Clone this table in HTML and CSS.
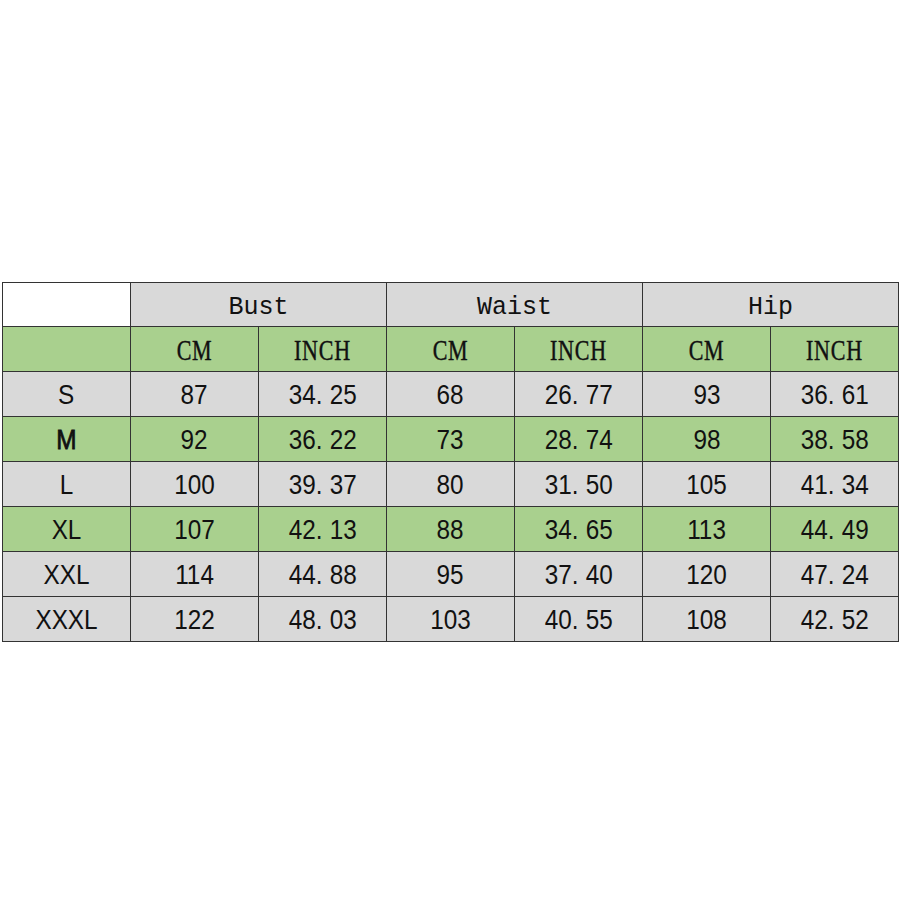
FILE: index.html
```html
<!DOCTYPE html>
<html>
<head>
<meta charset="utf-8">
<link rel="stylesheet" href="styles.css">
</head>
<body>
<div class="page">
<table class="size-table">
  <colgroup>
    <col class="c"><col class="c"><col class="c"><col class="c"><col class="c"><col class="c"><col class="c">
  </colgroup>
  <tr class="r-head">
    <td class="blank"></td>
    <td colspan="2" class="grp">Bust</td>
    <td colspan="2" class="grp">Waist</td>
    <td colspan="2" class="grp">Hip</td>
  </tr>
  <tr class="r-unit green">
    <td></td>
    <td><span class="u">CM</span></td><td><span class="u">INCH</span></td>
    <td><span class="u">CM</span></td><td><span class="u">INCH</span></td>
    <td><span class="u">CM</span></td><td><span class="u">INCH</span></td>
  </tr>
  <tr class="gray">
    <td><span class="n">S</span></td>
    <td><span class="n">87</span></td><td><span class="n">34<span class="d">.</span>25</span></td>
    <td><span class="n">68</span></td><td><span class="n">26<span class="d">.</span>77</span></td>
    <td><span class="n">93</span></td><td><span class="n">36<span class="d">.</span>61</span></td>
  </tr>
  <tr class="green">
    <td><span class="n m">M</span></td>
    <td><span class="n">92</span></td><td><span class="n">36<span class="d">.</span>22</span></td>
    <td><span class="n">73</span></td><td><span class="n">28<span class="d">.</span>74</span></td>
    <td><span class="n">98</span></td><td><span class="n">38<span class="d">.</span>58</span></td>
  </tr>
  <tr class="gray">
    <td><span class="n">L</span></td>
    <td><span class="n">100</span></td><td><span class="n">39<span class="d">.</span>37</span></td>
    <td><span class="n">80</span></td><td><span class="n">31<span class="d">.</span>50</span></td>
    <td><span class="n">105</span></td><td><span class="n">41<span class="d">.</span>34</span></td>
  </tr>
  <tr class="green">
    <td><span class="n">XL</span></td>
    <td><span class="n">107</span></td><td><span class="n">42<span class="d">.</span>13</span></td>
    <td><span class="n">88</span></td><td><span class="n">34<span class="d">.</span>65</span></td>
    <td><span class="n">113</span></td><td><span class="n">44<span class="d">.</span>49</span></td>
  </tr>
  <tr class="gray">
    <td><span class="n">XXL</span></td>
    <td><span class="n">114</span></td><td><span class="n">44<span class="d">.</span>88</span></td>
    <td><span class="n">95</span></td><td><span class="n">37<span class="d">.</span>40</span></td>
    <td><span class="n">120</span></td><td><span class="n">47<span class="d">.</span>24</span></td>
  </tr>
  <tr class="gray">
    <td><span class="n">XXXL</span></td>
    <td><span class="n">122</span></td><td><span class="n">48<span class="d">.</span>03</span></td>
    <td><span class="n">103</span></td><td><span class="n">40<span class="d">.</span>55</span></td>
    <td><span class="n">108</span></td><td><span class="n">42<span class="d">.</span>52</span></td>
  </tr>
</table>
</div>
</body>
</html>
```
FILE: styles.css
```css
html, body {
  margin: 0;
  padding: 0;
  background: #ffffff;
}
.page {
  padding: 282px 0 0 2px;
}
.size-table {
  border-collapse: collapse;
  table-layout: fixed;
  width: 897px;
  font-family: "Liberation Sans", Arial, sans-serif;
  color: #111;
}
.size-table .c {
  width: 128px;
}
.size-table td {
  border: 1px solid #333333;
  padding: 2px 0 0 0;
  box-sizing: border-box;
  height: 45px;
  text-align: center;
  vertical-align: middle;
  line-height: 1;
}
.r-head td {
  height: 44px;
  padding-top: 5px;
  background: #d9d9d9;
}
.r-head td.blank {
  background: #ffffff;
}
.grp {
  font-family: "Liberation Mono", "Courier New", monospace;
  font-size: 25px;
  color: #111;
}
.green td {
  background: #a9d08e;
}
.gray td {
  background: #d9d9d9;
}
.u {
  display: inline-block;
  font-family: "Liberation Serif", "Times New Roman", serif;
  font-size: 29px;
  transform: scale(0.76, 1);
  letter-spacing: 1px;
  -webkit-text-stroke: 0.4px #111;
}
.n {
  display: inline-block;
  font-size: 27px;
  transform: scale(0.9, 1);
}
.n.m {
  -webkit-text-stroke: 0.8px #111;
}
.d {
  margin-right: 8px;
}
```
